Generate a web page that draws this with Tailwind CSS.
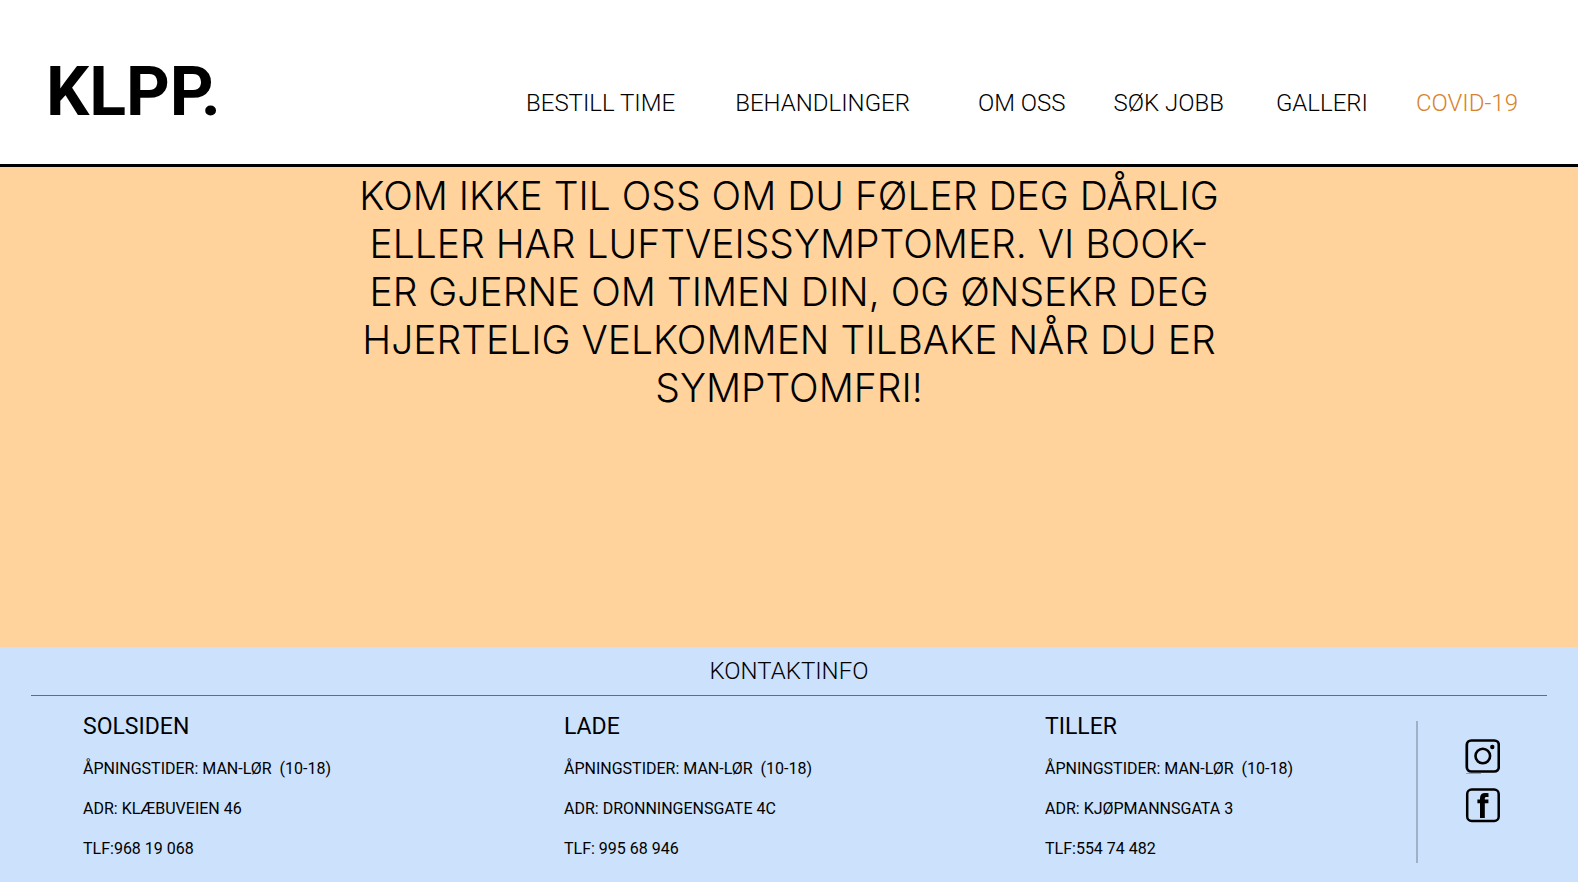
<!DOCTYPE html>
<html lang="no">
<head>
<meta charset="utf-8">
<title>KLPP.</title>
<meta name="viewport" content="width=device-width, initial-scale=1">
<script src="https://cdn.jsdelivr.net/npm/@tailwindcss/browser@4"></script>
</head>
<body class="flex min-h-screen flex-col bg-[#ffd39b] font-['Roboto','Liberation_Sans',sans-serif] text-black">
  <header class="flex items-start justify-between border-b-3 border-black bg-white pt-14 pr-[60px] pb-9 pl-[46px]">
    <a href="#" class="text-[68px] leading-[72px] font-bold">KLPP.</a>
    <nav class="flex pt-[31px] text-[24px] leading-8 font-light whitespace-nowrap">
      <a href="#" class="mr-[60px]">BESTILL TIME</a>
      <a href="#" class="mr-[68px]">BEHANDLINGER</a>
      <a href="#" class="mr-12">OM OSS</a>
      <a href="#" class="mr-[52px]">SØK JOBB</a>
      <a href="#" class="mr-12">GALLERI</a>
      <a href="#" class="text-[#d9822b]">COVID-19</a>
    </nav>
  </header>

  <main class="flex-1 px-6 pt-[5px] pb-12">
    <p class="text-center font-['Inter','Liberation_Sans',sans-serif] text-[39px] leading-[48px] font-light">
      KOM IKKE TIL OSS OM DU FØLER DEG DÅRLIG<br>
      ELLER HAR LUFTVEISSYMPTOMER. VI BOOK-<br>
      ER GJERNE OM TIMEN DIN, OG ØNSEKR DEG<br>
      HJERTELIG VELKOMMEN TILBAKE NÅR DU ER<br>
      SYMPTOMFRI!
    </p>
  </main>

  <footer class="bg-[#cce1fc] px-[31px] pt-2 pb-[19px]">
    <h2 class="border-b border-[#5f6e82] pb-2 text-center text-[24px] leading-8 font-light">KONTAKTINFO</h2>
    <div class="flex pt-[25px] pl-[52px]">
      <div class="grid flex-1 grid-cols-[481fr_481fr_371fr] text-[16px] leading-5 whitespace-nowrap">
        <section class="flex flex-col gap-5">
          <h3 class="-mt-2 text-[23px] leading-7">SOLSIDEN</h3>
          <p class="-mt-[2px]">ÅPNINGSTIDER: MAN-LØR &nbsp;(10-18)</p>
          <p>ADR: KLÆBUVEIEN 46</p>
          <p>TLF:968 19 068</p>
        </section>
        <section class="flex flex-col gap-5">
          <h3 class="-mt-2 text-[23px] leading-7">LADE</h3>
          <p class="-mt-[2px]">ÅPNINGSTIDER: MAN-LØR &nbsp;(10-18)</p>
          <p>ADR: DRONNINGENSGATE 4C</p>
          <p>TLF: 995 68 946</p>
        </section>
        <section class="flex flex-col gap-5">
          <h3 class="-mt-2 text-[23px] leading-7">TILLER</h3>
          <p class="-mt-[2px]">ÅPNINGSTIDER: MAN-LØR &nbsp;(10-18)</p>
          <p>ADR: KJØPMANNSGATA 3</p>
          <p>TLF:554 74 482</p>
        </section>
      </div>
      <div class="flex h-[142px] w-[131px] flex-col items-center gap-[14px] border-l-2 border-[#9fb0c8] pt-[18px]">
        <a href="#" aria-label="Instagram" class="block">
          <svg class="h-[35px] w-[35px]" viewBox="0 0 35 35" fill="none">
            <rect x="1.8" y="1.5" width="32" height="31" rx="4.5" stroke="#000" stroke-width="2.7"/>
            <circle cx="17.8" cy="17" r="7.3" stroke="#000" stroke-width="2.6"/>
            <circle cx="27.3" cy="8" r="2.2" fill="#000"/>
            <path d="M1 34.6H16" stroke="#6b7a90" stroke-width=".7"/>
          </svg>
        </a>
        <a href="#" aria-label="Facebook" class="block">
          <svg class="h-[35px] w-[35px]" viewBox="0 0 35 35" fill="none">
            <rect x="2.2" y="1.5" width="31.5" height="31.5" rx="4.5" stroke="#000" stroke-width="2.5"/>
            <path d="M15 30V15.2H12.4V11.6H15V10.2C15 6.7 16.8 5 20.2 5C21.4 5 22.6 5.1 23.5 5.3V9.1C22.8 9 22.3 8.9 21.6 8.9C20.2 8.9 19.8 9.4 19.8 10.6V11.6H23.4V15.2H19.8V30Z" fill="#000"/>
          </svg>
        </a>
      </div>
    </div>
  </footer>
</body>
</html>
